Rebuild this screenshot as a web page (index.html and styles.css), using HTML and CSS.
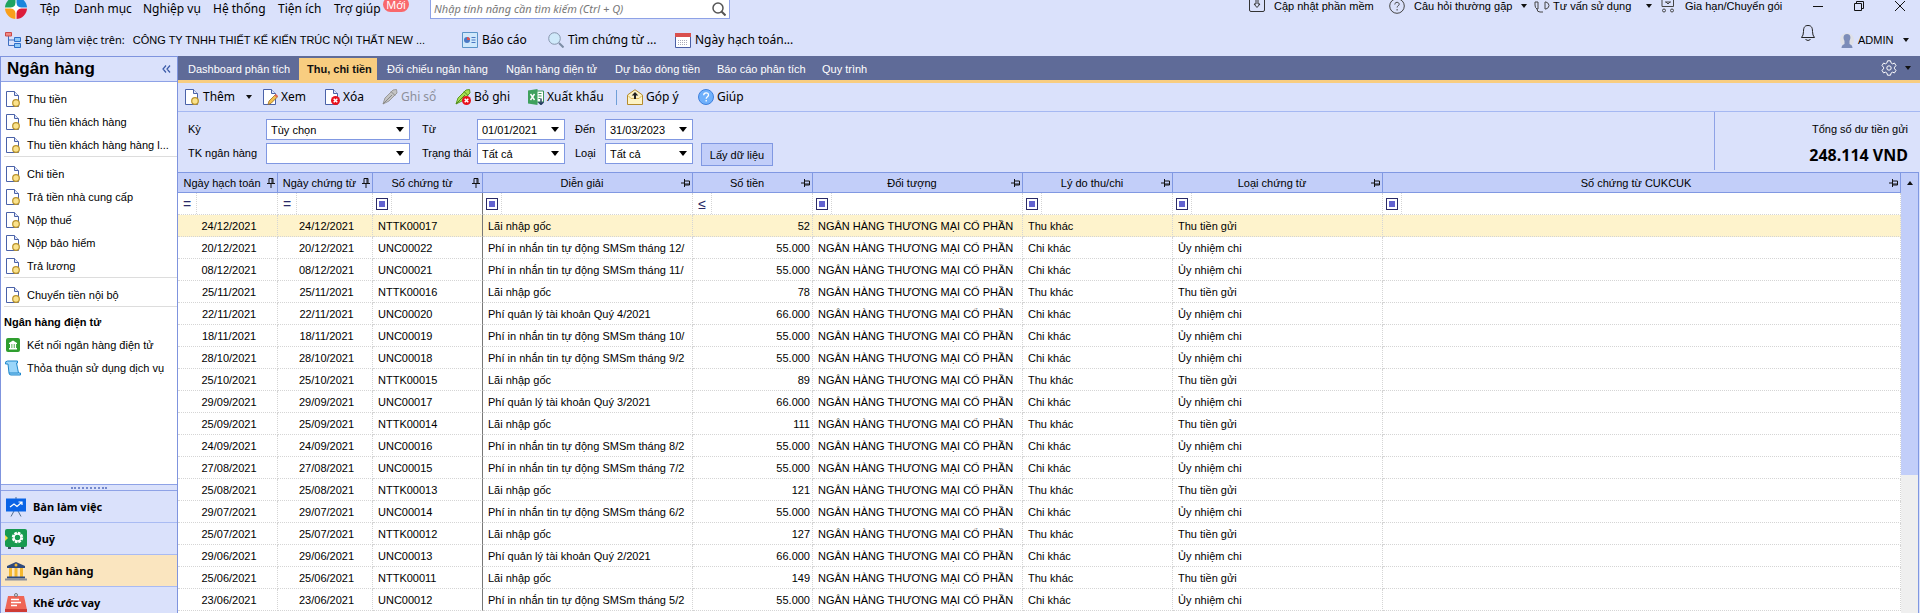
FILE: index.html
```html
<!DOCTYPE html>
<html lang="vi">
<head>
  <meta charset="UTF-8">
  <meta name="viewport" content="width=device-width, initial-scale=1.0">
  <title>Ngân hàng - Thu, chi tiền</title>
  <link rel="stylesheet" href="styles.css">
</head>
<body>

  <!-- ICONS -->
  <svg class="icon-defs" width="0" height="0" aria-hidden="true">
    <symbol id="page" viewBox="0 0 16 16">
      <path d="M1.5.5h8l4 4v11h-12z" fill="#fff" stroke="#4a62a8"/>
      <path d="M9.500.5v4h4" fill="#dfe6fb" stroke="#4a62a8"/>
    </symbol>
    <symbol id="doc" viewBox="0 0 16 16">
      <use href="#page"/>
      <circle cx="11" cy="12" r="3.300" fill="#fbe38c" stroke="#b8922c" stroke-width="1.200"/>
    </symbol>
    <symbol id="edit" viewBox="0 0 16 16">
      <use href="#page"/>
      <path d="M6 15.500l1-3.500 6.500-6.500 2.200 2.200-6.500 6.500z" fill="#f3c04e" stroke="#9c6a25" stroke-width=".8"/>
      <path d="M12.500 6.500l1.500-1.500 2 2-1.500 1.500z" fill="#e0645a"/>
    </symbol>
    <symbol id="cross" viewBox="0 0 16 16">
      <circle cx="11.500" cy="11.500" r="4.500" fill="#e8101c"/>
      <path d="M9.700 9.700l3.600 3.600M13.300 9.700l-3.600 3.600" stroke="#fff" stroke-width="1.500"/>
    </symbol>
    <symbol id="delete" viewBox="0 0 16 16">
      <use href="#page"/>
      <use href="#cross"/>
    </symbol>
    <symbol id="pen" viewBox="0 0 16 16">
      <path d="M1 15l2-6 8-8 3.500-.5.5 3.500-8 8z" fill="#c4c4c4" stroke="#999"/>
      <path d="M1 15l9-9M9 2.500l4 4" stroke="#888" fill="none"/>
    </symbol>
    <symbol id="pen-cross" viewBox="0 0 16 16">
      <path d="M1 15l2-6 8-8 3.500-.5.5 3.500-8 8z" fill="#a5e04f" stroke="#5c9a22"/>
      <path d="M1 15l9-9M9 2.500l4 4" stroke="#4e861f" fill="none"/>
      <use href="#cross"/>
    </symbol>
    <symbol id="excel" viewBox="0 0 16 16">
      <path d="M8 2h7.500v11H8z" fill="#fff" stroke="#3b9357"/>
      <path d="M10.500 4.500h3M10.500 7h3M10.500 9.500h2" stroke="#3b9357"/>
      <path d="M0 1.500L9.500 0v16L0 14.500z" fill="#3fa15d"/>
      <path d="M2.500 5l4 6M6.500 5l-4 6" stroke="#fff" stroke-width="1.400"/>
      <path d="M13 9.500v6M10.500 13l2.500 2.500 2.500-2.500" stroke="#223a5e" stroke-width="1.400" fill="none"/>
    </symbol>
    <symbol id="letter" viewBox="0 0 16 16">
      <path d="M.5 6L8 .7 15.500 6v9.500H.5z" fill="#fdf3c5" stroke="#b48a2c"/>
      <path d="M1 6.500l3 3h8l3-3" fill="none" stroke="#dcb95c"/>
      <path d="M8 3l3.300 3.500H9V10H7V6.500H4.700z" fill="#222"/>
    </symbol>
    <symbol id="help" viewBox="0 0 16 16">
      <circle cx="8" cy="8" r="7.500" fill="#6fb0fb" stroke="#3f80dc"/>
      <path d="M5.700 6.300c0-3.300 4.800-3.200 4.800-.4 0 1.800-2.300 1.700-2.300 3.900M8.200 11v1.600" fill="none" stroke="#fff" stroke-width="1.300"/>
    </symbol>
    <symbol id="pin" viewBox="0 0 9 10">
      <path d="M2.500.5h4v5h-4zM5.500.5v5M.5 5.500h8M4.500 5.500V10" fill="none" stroke="#111"/>
    </symbol>
    <symbol id="pin-side" viewBox="0 0 10 9">
      <path d="M3.500 2.500h5v4h-5zM3.500 5.500h5M3.500.5v8M0 4.500h3.500" fill="none" stroke="#111"/>
    </symbol>
  </svg>

  <!-- TOP -->
  <header>
    <div class="menu-row">
      <nav class="menu">
        <svg class="logo" viewBox="0 0 22 22">
          <path d="M11 11V0A11 11 0 0 0 0 11z" fill="#1ea362"/>
          <path d="M11 11h11A11 11 0 0 0 11 0z" fill="#1a86dc"/>
          <path d="M11 11H0a11 11 0 0 0 11 11z" fill="#f99f1b"/>
          <path d="M11 11v11a11 11 0 0 0 11-11z" fill="#dc1c3a"/>
          <path d="M11 0v22M0 11h22" stroke="#fff"/>
          <path d="M11 5.500q1 4.500 5.500 5.500-4.500 1-5.500 5.500-1-4.500-5.500-5.500 4.500-1 5.500-5.500z" fill="#fff"/>
        </svg>
        <a href="#">Tệp</a>
        <a href="#">Danh mục</a>
        <a href="#">Nghiệp vụ</a>
        <a href="#">Hệ thống</a>
        <a href="#">Tiện ích</a>
        <a href="#">Trợ giúp</a>
        <span class="new-badge">Mới</span>
      </nav>

      <div class="search">
        <input type="text" aria-label="Tìm kiếm" placeholder="Nhập tính năng cần tìm kiếm (Ctrl + Q)">
        <svg width="14" height="14" viewBox="0 0 14 14"><circle cx="6" cy="6" r="5" fill="none" stroke="#555" stroke-width="1.500"/><path d="M9.500 9.500l4 4" stroke="#555" stroke-width="2"/></svg>
      </div>

      <div class="support">
        <a href="#" class="update"><svg width="16" height="14" viewBox="0 0 16 14" fill="none" stroke="#333"><path d="M.5 0v11q0 1.500 1.500 1.500h12q1.500 0 1.500-1.500V0M7 0v5H5l3 3.500L11 5H9V0"/></svg>Cập nhật phần mềm</a>
        <a href="#" class="faq"><svg width="16" height="16" viewBox="0 0 16 16" fill="none" stroke="#444"><circle cx="8" cy="8" r="7.300"/><path d="M5.800 6.500c0-3 4.400-2.800 4.400-.2 0 1.500-2.100 1.500-2.100 3.200M8.100 11v1.500"/></svg>Câu hỏi thường gặp<i class="caret"></i></a>
        <a href="#" class="advice"><svg width="16" height="14" viewBox="0 0 16 14" fill="none" stroke="#444"><path d="M1 3h3v7H3Q1 9 1 6zM11 3h1q3 1 3 3.500T12 10h-1zM3 10q0 3 3 3h3"/></svg>Tư vấn sử dụng<i class="caret"></i></a>
        <a href="#" class="renew"><svg width="14" height="14" viewBox="0 0 14 14" fill="none" stroke="#444"><path d="M1 0v7.500h11.500V0M4 3h6M5 3l2 2 2-2"/><circle cx="3" cy="11.500" r="1.500"/><circle cx="11" cy="11.500" r="1.500"/></svg>Gia hạn/Chuyển gói</a>
        <button aria-label="Thu nhỏ"><svg width="11" height="12" viewBox="0 0 11 12"><path d="M0 6.500h10" stroke="#111"/></svg></button>
        <button aria-label="Khôi phục"><svg width="11" height="12" viewBox="0 0 11 12" fill="none" stroke="#111"><path d="M.5 3.500h7v7h-7zM2.500 3V1.500h7v7H8"/></svg></button>
        <button aria-label="Đóng"><svg width="11" height="12" viewBox="0 0 11 12"><path d="M0 1l10 10M10 1L0 11" stroke="#111"/></svg></button>
      </div>
    </div>

    <div class="company-row">
      <div class="quick-links">
        <div class="company">
          <svg width="16" height="16" viewBox="0 0 16 16"><path d="M3.500 4v9.500H10M3.500 8H10" fill="none" stroke="#3f6fc0"/><path d="M.5.500h6v3.500h-6z" fill="#f08a85" stroke="#cc4a48"/><path d="M9.500 5.500h6v4h-6zM9.500 11.500h6v4h-6z" fill="#8fc8f8" stroke="#2e6fc9"/></svg>
          <span>Đang làm việc trên:</span>
          <a href="#">CÔNG TY TNHH THIẾT KẾ KIẾN TRÚC NỘI THẤT NEW ...</a>
        </div>
        <a href="#"><svg width="16" height="16" viewBox="0 0 16 16"><path d="M.5.5h15v15H.5z" fill="#cfe8fb" stroke="#5a94c8"/><circle cx="5" cy="8" r="3" fill="#4b79c4"/><path d="M5 8V5a3 3 0 0 1 3 3z" fill="#e05450"/><path d="M9.500 5.500h4M9.500 8h4M9.500 10.500h4" stroke="#4b79c4"/></svg>Báo cáo</a>
        <a href="#"><svg width="16" height="16" viewBox="0 0 16 16"><circle cx="6.500" cy="6.500" r="5.800" fill="#cfe9fa" stroke="#8796ad"/><path d="M11 11l4.500 4.500" stroke="#7c8da5" stroke-width="2"/></svg>Tìm chứng từ ...</a>
        <a href="#"><svg width="16" height="15" viewBox="0 0 16 15"><path d="M.5.500h15v14H.5z" fill="#fff" stroke="#4a5fa5"/><path d="M0 0h16v4H0z" fill="#d9504e"/><path d="M3 7.500h10M3 9.500h10M3 11.500h10" stroke="#aab" stroke-dasharray="1 1"/></svg>Ngày hạch toán...</a>
      </div>

      <div class="user">
        <button aria-label="Thông báo"><svg width="16" height="18" viewBox="0 0 16 18" fill="none" stroke="#222"><path d="M1.500 13.500q2-2 2-6C3.500 3 5 1.500 8 1.500s4.500 1.500 4.500 6q0 4 2 6zM5.500 15.500q2.500 2 5 0"/></svg></button>
        <a href="#" class="account"><svg width="14" height="15" viewBox="0 0 14 15"><circle cx="7" cy="7" r="7" fill="#dfe0e6"/><path d="M7 1c4 0 4 4 2.500 7v3q3 1 3 4h-11q0-3 3-4V8C3 5 3 1 7 1z" fill="#7c8cb8"/></svg>ADMIN<i class="caret"></i></a>
      </div>
    </div>
  </header>

  <div class="content">

    <!-- SIDEBAR -->
    <aside>
      <div class="side-title"><h1>Ngân hàng</h1><button aria-label="Thu gọn"><svg width="9" height="8" viewBox="0 0 9 8"><path d="M4 .5L1 4l3 3.500M8 .5L5 4l3 3.500" fill="none" stroke="#3a5aa8" stroke-width="1.200"/></svg></button></div>

      <div class="side-list">
        <ul>
          <li><a href="#"><svg><use href="#doc"/></svg>Thu tiền</a></li>
          <li><a href="#"><svg><use href="#doc"/></svg>Thu tiền khách hàng</a></li>
          <li><a href="#"><svg><use href="#doc"/></svg>Thu tiền khách hàng hàng l...</a></li>
        </ul>
        <ul>
          <li><a href="#"><svg><use href="#doc"/></svg>Chi tiền</a></li>
          <li><a href="#"><svg><use href="#doc"/></svg>Trả tiền nhà cung cấp</a></li>
          <li><a href="#"><svg><use href="#doc"/></svg>Nộp thuế</a></li>
          <li><a href="#"><svg><use href="#doc"/></svg>Nộp bảo hiểm</a></li>
          <li><a href="#"><svg><use href="#doc"/></svg>Trả lương</a></li>
        </ul>
        <ul>
          <li><a href="#"><svg><use href="#doc"/></svg>Chuyển tiền nội bộ</a></li>
        </ul>
        <h2>Ngân hàng điện tử</h2>
        <ul>
          <li><a href="#"><svg viewBox="0 0 16 16"><rect x="1" y="1" width="14" height="14" rx="2" fill="#2f9e2f"/><path d="M4 6l4-2.500L12 6v1H4zM5 7h1.500v4H5zM7.300 7h1.500v4H7.300zM9.600 7h1.500v4H9.600zM4 11h8v1.500H4z" fill="#fff"/></svg>Kết nối ngân hàng điện tử</a></li>
          <li><a href="#"><svg viewBox="0 0 16 16"><path d="M2.500 1h10v2h-1l2 10h2v2H6q-2 0-2-2L3 4H.5Q0 1 2.500 1z" fill="#9bd6fa" stroke="#2088cc"/><path d="M4 13h9" stroke="#2088cc"/></svg>Thỏa thuận sử dụng dịch vụ</a></li>
        </ul>
      </div>

      <div class="splitter"><span></span></div>

      <nav class="modules">
        <a href="#"><svg width="22" height="20" viewBox="0 0 22 20"><path d="M9 14l-3 5.500M13 14l3 5.500M11 0v2" stroke="#54708f"/><path d="M1 1.500h20v13H1z" fill="#0a64e6"/><path d="M5 10l4-3 3 2.500 4.500-4M13.500 5h3.500v3" fill="none" stroke="#fff" stroke-width="1.200"/></svg>Bàn làm việc</a>
        <a href="#"><svg width="22" height="20" viewBox="0 0 22 20"><rect width="22" height="18" rx="2" fill="#189a50"/><path d="M3 18h3v2H3zM16 18h3v2h-3z" fill="#3b5560"/><path d="M0 6l3 3-3 3z" fill="#f5e04b"/><circle cx="12.500" cy="8.500" r="4.500" fill="none" stroke="#fff" stroke-width="2.500" stroke-dasharray="2.500 1"/><circle cx="12.500" cy="8.500" r="3.500" fill="none" stroke="#fff" stroke-width="1.500"/></svg>Quỹ</a>
        <a href="#" class="selected"><svg width="22" height="20" viewBox="0 0 22 20"><path d="M11 1l9 4v2H2V5z" fill="#2f4a7c"/><circle cx="11" cy="4" r="1.500" fill="#f5b82e"/><path d="M4 7h3v9H4zM9.500 7h3v9h-3zM15 7h3v9h-3z" fill="#f5b82e"/><path d="M2 15.500h18v2H2z" fill="#2f4a7c"/><path d="M0 17.500h22v2H0z" fill="#8a8f9c"/></svg>Ngân hàng</a>
        <a href="#"><svg width="22" height="20" viewBox="0 0 22 20"><path d="M3 3h16l3 14H0z" fill="#ef6555"/><path d="M0 16h22v3H0z" fill="#cf3b35"/><circle cx="11" cy="2" r="1.500" fill="none" stroke="#777"/><path d="M6 6.500h8M6 9.500h10M6 12.500h6" stroke="#fff" stroke-width="1.500"/></svg>Khế ước vay</a>
      </nav>
    </aside>

    <!-- MAIN -->
    <main>
      <div class="tab-bar">
        <nav class="tabs">
          <a href="#">Dashboard phân tích</a>
          <a href="#" class="active">Thu, chi tiền</a>
          <a href="#">Đối chiếu ngân hàng</a>
          <a href="#">Ngân hàng điện tử</a>
          <a href="#">Dự báo dòng tiền</a>
          <a href="#">Báo cáo phân tích</a>
          <a href="#">Quy trình</a>
        </nav>
        <button class="settings" aria-label="Thiết lập"><svg width="16" height="16" viewBox="0 0 16 16" fill="none" stroke="#fff"><path d="M6.500.8h3l.5 2 1.500 1 2-.7 1.500 2.600L13.500 7.200v1.600l1.500 1.500-1.500 2.600-2-.7-1.500 1-.5 2h-3l-.5-2-1.500-1-2 .7L1 10.300l1.500-1.500V7.200L1 5.700l1.500-2.600 2 .7 1.500-1z"/><circle cx="8" cy="8" r="2.200"/></svg><i class="caret"></i></button>
      </div>

      <div class="toolbar">
        <button><svg><use href="#doc"/></svg>Thêm<i class="caret"></i></button>
        <button><svg><use href="#edit"/></svg>Xem</button>
        <button><svg><use href="#delete"/></svg>Xóa</button>
        <button disabled><svg><use href="#pen"/></svg>Ghi sổ</button>
        <button><svg><use href="#pen-cross"/></svg>Bỏ ghi</button>
        <button><svg><use href="#excel"/></svg>Xuất khẩu</button>
        <span class="divider"></span>
        <button><svg><use href="#letter"/></svg>Góp ý</button>
        <button><svg><use href="#help"/></svg>Giúp</button>
      </div>

      <div class="filter-bar">
        <form class="filters">
          <label for="period">Kỳ</label>
          <select id="period"><option>Tùy chọn</option></select>
          <label for="from">Từ</label>
          <input id="from" type="text" value="01/01/2021">
          <label for="to">Đến</label>
          <input id="to" type="text" value="31/03/2023">
          <span></span>
          <label for="account">TK ngân hàng</label>
          <select id="account"><option></option></select>
          <label for="status">Trạng thái</label>
          <select id="status"><option>Tất cả</option></select>
          <label for="kind">Loại</label>
          <select id="kind"><option>Tất cả</option></select>
          <button type="button">Lấy dữ liệu</button>
        </form>
        <div class="balance">
          <p>Tổng số dư tiền gửi</p>
          <strong>248.114 VND</strong>
        </div>
      </div>

      <div class="grid">
        <div class="rows">
          <table>
            <colgroup>
              <col class="w-date"><col class="w-posted"><col class="w-number"><col class="w-text"><col class="w-amount"><col class="w-text"><col class="w-reason"><col class="w-text"><col>
            </colgroup>
            <thead>
              <tr>
                <th><div>Ngày hạch toán<svg class="pin"><use href="#pin"/></svg></div></th>
                <th><div>Ngày chứng từ<svg class="pin"><use href="#pin"/></svg></div></th>
                <th><div>Số chứng từ<svg class="pin"><use href="#pin"/></svg></div></th>
                <th><div>Diễn giải<svg class="pin"><use href="#pin-side"/></svg></div></th>
                <th><div>Số tiền<svg class="pin"><use href="#pin-side"/></svg></div></th>
                <th><div>Đối tượng<svg class="pin"><use href="#pin-side"/></svg></div></th>
                <th><div>Lý do thu/chi<svg class="pin"><use href="#pin-side"/></svg></div></th>
                <th><div>Loại chứng từ<svg class="pin"><use href="#pin-side"/></svg></div></th>
                <th><div>Số chứng từ CUKCUK<svg class="pin"><use href="#pin-side"/></svg></div></th>
              </tr>
            </thead>
            <tbody>
              <tr class="search-row">
                <td><div><b>=</b><input type="text" aria-label="Lọc ngày hạch toán"></div></td>
                <td><div><b>=</b><input type="text" aria-label="Lọc ngày chứng từ"></div></td>
                <td><div><b><i class="box"></i></b><input type="text" aria-label="Lọc số chứng từ"></div></td>
                <td><div><b><i class="box"></i></b><input type="text" aria-label="Lọc diễn giải"></div></td>
                <td><div><b>≤</b><input type="text" aria-label="Lọc số tiền"></div></td>
                <td><div><b><i class="box"></i></b><input type="text" aria-label="Lọc đối tượng"></div></td>
                <td><div><b><i class="box"></i></b><input type="text" aria-label="Lọc lý do"></div></td>
                <td><div><b><i class="box"></i></b><input type="text" aria-label="Lọc loại chứng từ"></div></td>
                <td><div><b><i class="box"></i></b><input type="text" aria-label="Lọc số chứng từ CUKCUK"></div></td>
              </tr>
              <tr class="current"><td>24/12/2021</td><td>24/12/2021</td><td>NTTK00017</td><td>Lãi nhập gốc</td><td>52</td><td>NGÂN HÀNG THƯƠNG MẠI CỔ PHẦN</td><td>Thu khác</td><td>Thu tiền gửi</td><td></td></tr>
              <tr><td>20/12/2021</td><td>20/12/2021</td><td>UNC00022</td><td>Phí in nhắn tin tự động SMSm tháng 12/</td><td>55.000</td><td>NGÂN HÀNG THƯƠNG MẠI CỔ PHẦN</td><td>Chi khác</td><td>Ủy nhiệm chi</td><td></td></tr>
              <tr><td>08/12/2021</td><td>08/12/2021</td><td>UNC00021</td><td>Phí in nhắn tin tự động SMSm tháng 11/</td><td>55.000</td><td>NGÂN HÀNG THƯƠNG MẠI CỔ PHẦN</td><td>Chi khác</td><td>Ủy nhiệm chi</td><td></td></tr>
              <tr><td>25/11/2021</td><td>25/11/2021</td><td>NTTK00016</td><td>Lãi nhập gốc</td><td>78</td><td>NGÂN HÀNG THƯƠNG MẠI CỔ PHẦN</td><td>Thu khác</td><td>Thu tiền gửi</td><td></td></tr>
              <tr><td>22/11/2021</td><td>22/11/2021</td><td>UNC00020</td><td>Phí quản lý tài khoản Quý 4/2021</td><td>66.000</td><td>NGÂN HÀNG THƯƠNG MẠI CỔ PHẦN</td><td>Chi khác</td><td>Ủy nhiệm chi</td><td></td></tr>
              <tr><td>18/11/2021</td><td>18/11/2021</td><td>UNC00019</td><td>Phí in nhắn tin tự động SMSm tháng 10/</td><td>55.000</td><td>NGÂN HÀNG THƯƠNG MẠI CỔ PHẦN</td><td>Chi khác</td><td>Ủy nhiệm chi</td><td></td></tr>
              <tr><td>28/10/2021</td><td>28/10/2021</td><td>UNC00018</td><td>Phí in nhắn tin tự động SMSm tháng 9/2</td><td>55.000</td><td>NGÂN HÀNG THƯƠNG MẠI CỔ PHẦN</td><td>Chi khác</td><td>Ủy nhiệm chi</td><td></td></tr>
              <tr><td>25/10/2021</td><td>25/10/2021</td><td>NTTK00015</td><td>Lãi nhập gốc</td><td>89</td><td>NGÂN HÀNG THƯƠNG MẠI CỔ PHẦN</td><td>Thu khác</td><td>Thu tiền gửi</td><td></td></tr>
              <tr><td>29/09/2021</td><td>29/09/2021</td><td>UNC00017</td><td>Phí quản lý tài khoản Quý 3/2021</td><td>66.000</td><td>NGÂN HÀNG THƯƠNG MẠI CỔ PHẦN</td><td>Chi khác</td><td>Ủy nhiệm chi</td><td></td></tr>
              <tr><td>25/09/2021</td><td>25/09/2021</td><td>NTTK00014</td><td>Lãi nhập gốc</td><td>111</td><td>NGÂN HÀNG THƯƠNG MẠI CỔ PHẦN</td><td>Thu khác</td><td>Thu tiền gửi</td><td></td></tr>
              <tr><td>24/09/2021</td><td>24/09/2021</td><td>UNC00016</td><td>Phí in nhắn tin tự động SMSm tháng 8/2</td><td>55.000</td><td>NGÂN HÀNG THƯƠNG MẠI CỔ PHẦN</td><td>Chi khác</td><td>Ủy nhiệm chi</td><td></td></tr>
              <tr><td>27/08/2021</td><td>27/08/2021</td><td>UNC00015</td><td>Phí in nhắn tin tự động SMSm tháng 7/2</td><td>55.000</td><td>NGÂN HÀNG THƯƠNG MẠI CỔ PHẦN</td><td>Chi khác</td><td>Ủy nhiệm chi</td><td></td></tr>
              <tr><td>25/08/2021</td><td>25/08/2021</td><td>NTTK00013</td><td>Lãi nhập gốc</td><td>121</td><td>NGÂN HÀNG THƯƠNG MẠI CỔ PHẦN</td><td>Thu khác</td><td>Thu tiền gửi</td><td></td></tr>
              <tr><td>29/07/2021</td><td>29/07/2021</td><td>UNC00014</td><td>Phí in nhắn tin tự động SMSm tháng 6/2</td><td>55.000</td><td>NGÂN HÀNG THƯƠNG MẠI CỔ PHẦN</td><td>Chi khác</td><td>Ủy nhiệm chi</td><td></td></tr>
              <tr><td>25/07/2021</td><td>25/07/2021</td><td>NTTK00012</td><td>Lãi nhập gốc</td><td>127</td><td>NGÂN HÀNG THƯƠNG MẠI CỔ PHẦN</td><td>Thu khác</td><td>Thu tiền gửi</td><td></td></tr>
              <tr><td>29/06/2021</td><td>29/06/2021</td><td>UNC00013</td><td>Phí quản lý tài khoản Quý 2/2021</td><td>66.000</td><td>NGÂN HÀNG THƯƠNG MẠI CỔ PHẦN</td><td>Chi khác</td><td>Ủy nhiệm chi</td><td></td></tr>
              <tr><td>25/06/2021</td><td>25/06/2021</td><td>NTTK00011</td><td>Lãi nhập gốc</td><td>149</td><td>NGÂN HÀNG THƯƠNG MẠI CỔ PHẦN</td><td>Thu khác</td><td>Thu tiền gửi</td><td></td></tr>
              <tr><td>23/06/2021</td><td>23/06/2021</td><td>UNC00012</td><td>Phí in nhắn tin tự động SMSm tháng 5/2</td><td>55.000</td><td>NGÂN HÀNG THƯƠNG MẠI CỔ PHẦN</td><td>Chi khác</td><td>Ủy nhiệm chi</td><td></td></tr>
            </tbody>
          </table>
        </div>
        <div class="scrollbar">
          <button aria-label="Cuộn lên"><i class="caret up"></i></button>
          <span class="thumb"></span>
        </div>
      </div>
    </main>
  </div>

</body>
</html>
```
FILE: styles.css
```css
*{
  box-sizing: border-box;
}

body{
  margin: 0;
  height: 100vh;
  overflow: hidden;
  display: flex;
  flex-direction: column;
  background-color: #dae1fb;
  color: #000;
  font-family: "Liberation Sans", Arial, sans-serif;
  font-size: 11px;
  line-height: 16px;
  white-space: nowrap;
}

a{
  color: inherit;
  text-decoration: none;
}

button{
  padding: 0;
  border: none;
  background: none;
  color: inherit;
  font: inherit;
  text-align: left;
}

input,
select{
  font: inherit;
  color: inherit;
}

ul,
p,
h1,
h2{
  margin: 0;
  padding: 0;
}

li{
  list-style: none;
}

svg{
  flex-shrink: 0;
}

.icon-defs{
  position: absolute;
}

.caret{
  border: 3px solid transparent;
  border-top: 4px solid #111;
  border-bottom: none;
}

.caret.up{
  border-top: none;
  border-bottom: 4px solid #111;
}


/* top */
header{
  height: 56px;
  flex-shrink: 0;
  font-family: "Noto Sans", "Open Sans", sans-serif;
}

.menu-row{
  display: flex;
  height: 24px;
}

.menu{
  display: grid;
  grid-template-columns: 35px 34px 69px 70px 65px 56px 49px 47px;
  padding-left: 5px;
  font-size: 12px;
  line-height: 18px;
}

.logo{
  width: 22px;
  height: 22px;
  margin-top: -3px;
}

.new-badge{
  width: 26px;
  height: 15px;
  margin-top: -3px;
  border-radius: 8px;
  background-color: #f9686c;
  color: #fff;
  font-size: 11px;
  line-height: 16px;
  text-align: center;
}

.search{
  display: flex;
  align-items: center;
  width: 300px;
  height: 19px;
  padding-right: 3px;
  border: 1px solid #8ea2e6;
  border-top: none;
  background-color: #fff;
}

.search input{
  flex: 1;
  min-width: 0;
  padding: 0 3px;
  border: none;
  background: none;
  font-size: 11px;
  font-style: italic;
}

.search input::placeholder{
  color: #777;
}

.support{
  display: grid;
  grid-template-columns: 140px 145px 127px 152px 41px 41px 25px;
  align-items: start;
  height: 16px;
  margin-left: auto;
  font-family: "Liberation Sans", Arial, sans-serif;
  line-height: 12px;
}

.support a{
  display: flex;
  align-items: center;
  height: 12px;
  gap: 9px;
}

.support .advice{
  gap: 3px;
}

.support .caret{
  margin-left: 0;
}

.support .advice .caret{
  margin-left: 12px;
}

.support .renew{
  gap: 10px;
}

.support button{
  height: 12px;
}

.company-row{
  display: flex;
  justify-content: space-between;
  align-items: center;
  height: 32px;
  padding-left: 5px;
}

.quick-links{
  display: grid;
  grid-template-columns: 457px 86px 127px auto;
  font-size: 12px;
}

.quick-links a,
.company{
  display: flex;
  align-items: center;
  gap: 4px;
}

.company{
  font-size: 11px;
}

.company a{
  margin-left: 4px;
  font-family: "Liberation Sans", Arial, sans-serif;
}

.user{
  display: grid;
  grid-template-columns: 40px 80px;
  align-items: start;
  height: 32px;
}

.user button{
  height: 16px;
}

.user svg{
  display: block;
}

.account{
  display: flex;
  align-items: center;
  gap: 4px;
  height: 32px;
  font-family: "Liberation Sans", Arial, sans-serif;
}

.account .caret{
  margin-left: 6px;
}


/* sidebar */
.content{
  display: flex;
  flex: 1;
  min-height: 0;
}

aside{
  display: flex;
  flex-direction: column;
  width: 178px;
  flex-shrink: 0;
  border: 1px solid #7f94de;
  border-bottom: none;
}

.side-title{
  display: flex;
  justify-content: space-between;
  align-items: center;
  height: 25px;
  flex-shrink: 0;
  padding: 0 6px;
  border-bottom: 1px solid #8ea2e6;
}

.side-title h1{
  font-size: 17px;
  line-height: 24px;
}

.side-list{
  flex: 1;
  min-height: 0;
  overflow: hidden;
  padding: 5px 0 0 3px;
  background-color: #fff;
}

.side-list ul{
  margin-bottom: 5px;
  border-bottom: 1px solid #ddd;
}

.side-list ul:last-child{
  border: none;
}

.side-list a{
  display: flex;
  align-items: center;
  gap: 6px;
  height: 23px;
  padding-left: 1px;
}

.side-list svg,
.toolbar svg{
  width: 16px;
  height: 16px;
}

.side-list h2{
  font-size: 11px;
  line-height: 21px;
}

.splitter{
  display: flex;
  justify-content: center;
  align-items: center;
  height: 7px;
  flex-shrink: 0;
  border: 1px solid #8ea2e6;
  border-width: 1px 0;
}

.splitter span{
  width: 36px;
  border-top: 2px dotted #7388cc;
}

.modules{
  height: 122px;
  flex-shrink: 0;
  overflow: hidden;
  font-family: "Noto Sans", "Open Sans", sans-serif;
  font-size: 11px;
  font-weight: bold;
}

.modules a{
  display: flex;
  align-items: center;
  gap: 6px;
  height: 32px;
  padding-left: 4px;
  border-bottom: 1px solid #a9bbf3;
}

.modules .selected{
  background-color: #fae5bf;
}


/* tabs */
main{
  display: flex;
  flex-direction: column;
  flex: 1;
  min-width: 0;
}

.tab-bar{
  display: flex;
  justify-content: space-between;
  height: 27px;
  flex-shrink: 0;
  border-bottom: 3px solid #f8cd80;
  background-color: #5f6b98;
  color: #fff;
}

.tabs{
  display: grid;
  grid-template-columns: 121px 78px 119px 109px 102px 105px 64px;
  line-height: 22px;
  padding-top: 2px;
}

.tabs a{
  padding-left: 10px;
}

.tabs .active{
  padding-left: 8px;
  background-color: #f8cd80;
  color: #111;
  font-weight: bold;
}

.settings{
  display: flex;
  align-items: center;
  gap: 8px;
  padding-right: 9px;
}


/* toolbar */
.toolbar{
  display: grid;
  grid-template-columns: 78px 62px 58px 73px 73px 88px 11px 71px auto;
  align-items: center;
  justify-content: start;
  height: 29px;
  flex-shrink: 0;
  padding-left: 6px;
  border-bottom: 1px solid #a5b8f2;
  font-family: "Noto Sans", "Open Sans", sans-serif;
  font-size: 12px;
}

.toolbar button{
  display: flex;
  align-items: center;
  gap: 3px;
}

.toolbar button:disabled{
  color: #8c8f9a;
}

.toolbar .caret{
  margin-left: 8px;
}

.divider{
  width: 1px;
  height: 15px;
  background-color: #6f9fd8;
}


/* filters */
.filter-bar{
  display: flex;
  justify-content: space-between;
  height: 60px;
  flex-shrink: 0;
}

.filters{
  display: grid;
  grid-template-columns: 78px 144px 67px 88px 40px 88px 80px;
  grid-template-rows: 21px 21px;
  row-gap: 3px;
  padding: 7px 0 0 10px;
}

.filters label{
  line-height: 21px;
}

.filters label[for="from"],
.filters label[for="status"]{
  padding-left: 12px;
}

.filters label[for="to"],
.filters label[for="kind"]{
  padding-left: 10px;
}

.filters select,
.filters input{
  appearance: none;
  width: 100%;
  height: 21px;
  padding: 0 4px;
  border: 1px solid #8098e2;
  border-radius: 0;
  background: #fff url("data:image/svg+xml,%3Csvg xmlns='http://www.w3.org/2000/svg' width='8' height='5'%3E%3Cpath d='M0 0h8L4 5z'/%3E%3C/svg%3E") no-repeat right 5px center;
}

.filters button{
  width: 72px;
  height: 23px;
  margin-left: 8px;
  border: 1px solid #8098e2;
  background-color: #c2cef9;
  text-align: center;
}

.balance{
  width: 206px;
  height: 58px;
  padding: 9px 12px 0 0;
  border-left: 1px solid #8ea2e6;
  text-align: right;
}

.balance strong{
  display: block;
  margin-top: 8px;
  font-family: "Noto Sans", "Open Sans", sans-serif;
  font-size: 16px;
  line-height: 20px;
}


/* grid */
.grid{
  display: flex;
  flex: 1;
  min-height: 0;
  overflow: hidden;
  margin-right: 1px;
  border-top: 1px solid #8098e2;
  border-right: 1px solid #8098e2;
  background-color: #fff;
}

.rows{
  flex: 1;
  min-width: 0;
}

table{
  width: 100%;
  table-layout: fixed;
  border-collapse: separate;
  border-spacing: 0;
}

.w-date{
  width: 100px;
}

.w-posted{
  width: 95px;
}

.w-number{
  width: 110px;
}

.w-text{
  width: 210px;
}

.w-amount{
  width: 120px;
}

.w-reason{
  width: 150px;
}

th{
  height: 20px;
  padding: 0;
  border-right: 1px solid #8098e2;
  border-bottom: 1px solid #8098e2;
  background-color: #c2cef9;
  font-weight: normal;
}

th div{
  display: grid;
  grid-template-columns: 1fr 11px;
  align-items: center;
}

.pin{
  width: 10px;
  height: 10px;
}

td{
  height: 22px;
  padding: 0 2px 0 5px;
  overflow: hidden;
  border-right: 1px dotted #d5d5d5;
  border-bottom: 1px dotted #d5d5d5;
}

td:nth-child(1),
td:nth-child(2){
  text-align: center;
}

td:nth-child(3){
  border-right: 1px solid #777;
}

td:nth-child(5){
  text-align: right;
}

.current td{
  background-color: #fef3cc;
}

.search-row td{
  padding: 0;
}

.search-row div{
  display: flex;
  height: 21px;
}

.search-row b{
  display: flex;
  align-items: center;
  justify-content: center;
  width: 19px;
  flex-shrink: 0;
  border-right: 1px dotted #d5d5d5;
  color: #2a2a68;
  font-size: 14px;
  font-weight: normal;
}

.search-row input{
  flex: 1;
  min-width: 0;
  border: none;
  background: none;
}

.box{
  width: 12px;
  height: 12px;
  border: 1px solid #2a2a68;
  background-color: #6464d0;
  box-shadow: inset 0 0 0 2px #fff;
}

.scrollbar{
  display: flex;
  flex-direction: column;
  width: 17px;
  flex-shrink: 0;
  background-color: #efefef;
}

.scrollbar button{
  display: flex;
  align-items: center;
  justify-content: center;
  height: 20px;
  background-color: #c2cef9;
}

.thumb{
  height: 282px;
  background-color: #c2cef9;
}
```
